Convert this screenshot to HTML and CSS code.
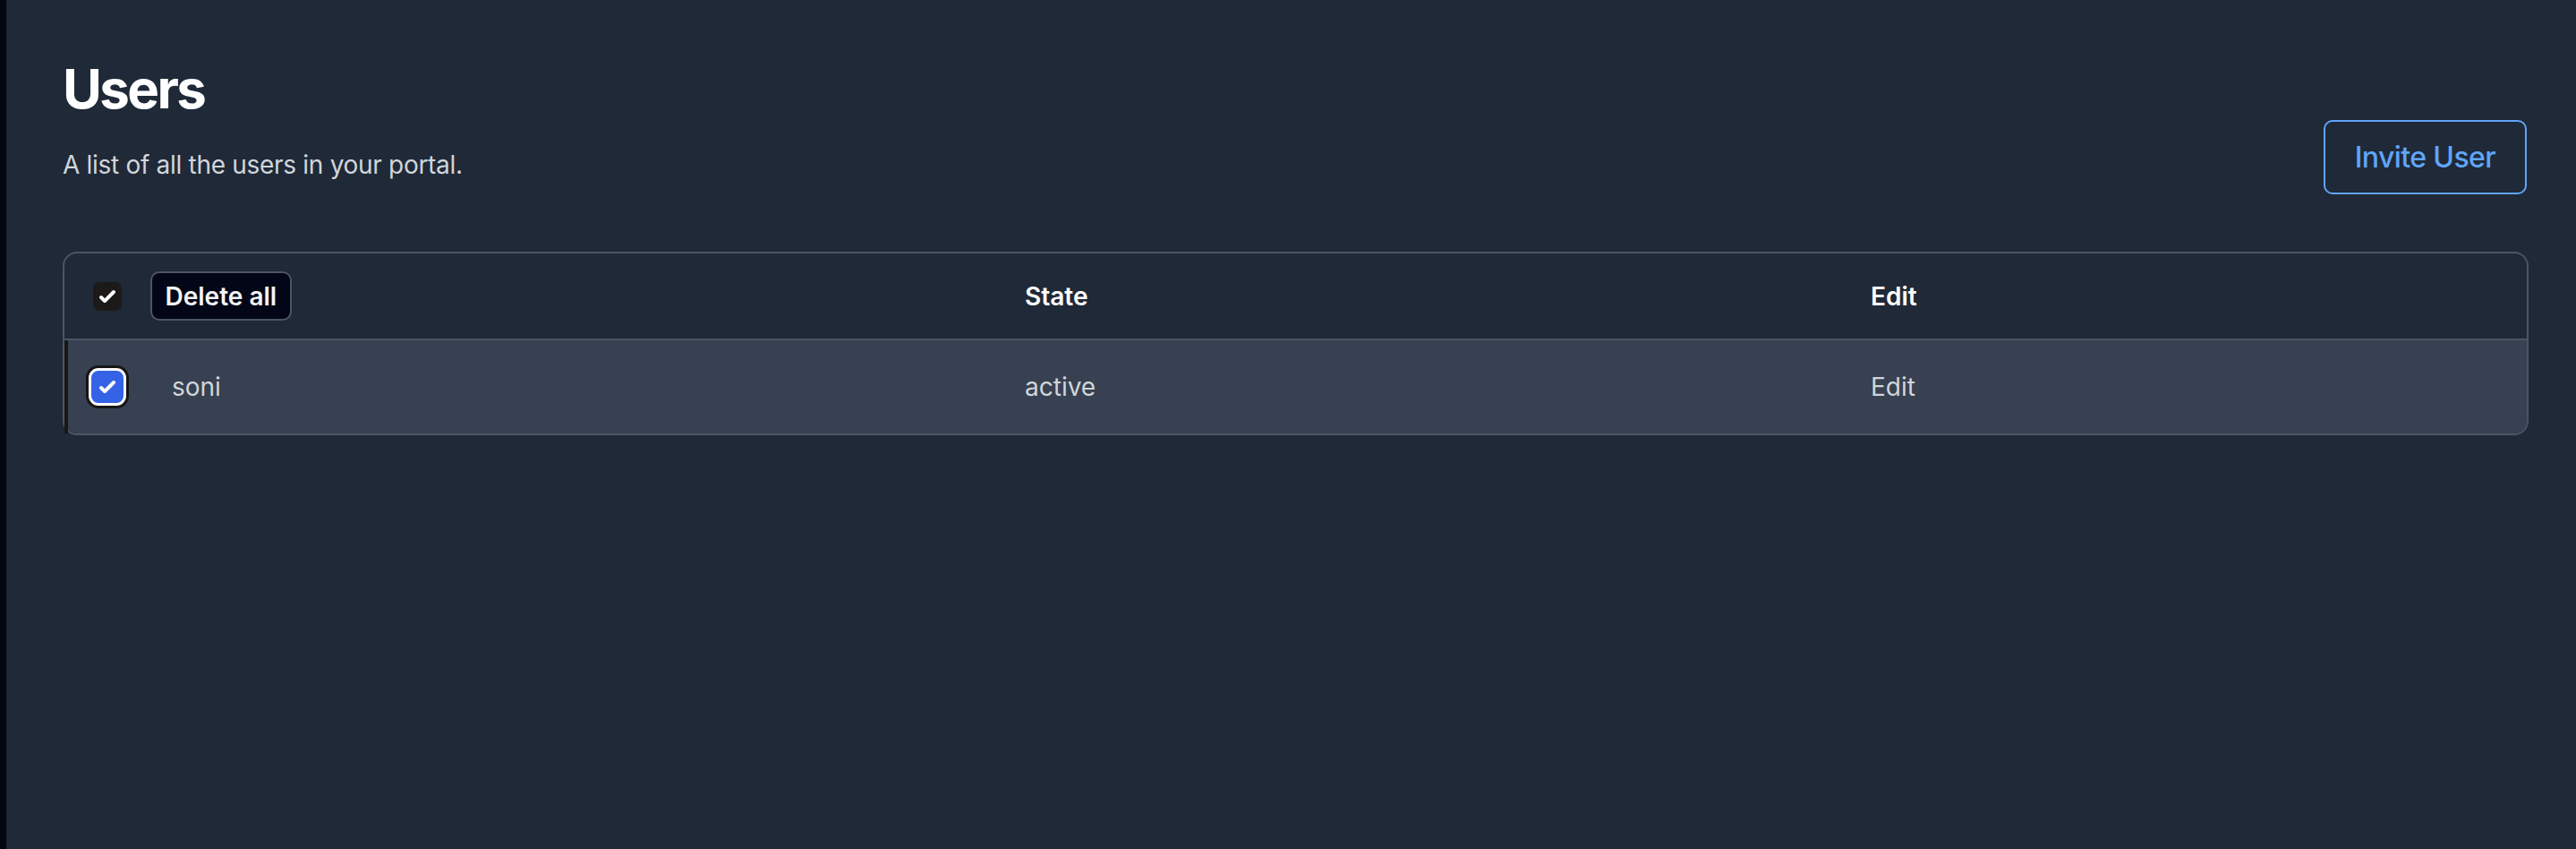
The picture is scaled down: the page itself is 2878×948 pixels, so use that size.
FILE: index.html
```html
<!DOCTYPE html>
<html lang="en">
<head>
<meta charset="utf-8">
<title>Users</title>
<link rel="stylesheet" href="styles.css">
</head>
<body>
<div class="edge"></div>
<main class="main">
  <div class="page-head">
    <div class="intro">
      <h1 class="title">Users</h1>
      <p class="subtitle">A list of all the users in your portal.</p>
    </div>
    <button class="invite-btn" type="button">Invite User</button>
  </div>

  <div class="table">
    <div class="thead">
      <div class="cell-check">
        <span class="checkbox checkbox-dark">
          <svg viewBox="0 0 16 16" width="32" height="32"><path fill="#fff" d="M12.207 4.793a1 1 0 010 1.414l-5 5a1 1 0 01-1.414 0l-2-2a1 1 0 011.414-1.414L6.5 9.086l4.293-4.293a1 1 0 011.414 0z"/></svg>
        </span>
      </div>
      <div class="cell-bulk">
        <button class="delete-btn" type="button">Delete all</button>
      </div>
      <div class="th">State</div>
      <div class="th">Edit</div>
    </div>
    <div class="trow selected">
      <div class="cell-check row-check">
        <span class="checkbox checkbox-blue">
          <svg viewBox="0 0 16 16" width="32" height="32"><path fill="#fff" d="M12.207 4.793a1 1 0 010 1.414l-5 5a1 1 0 01-1.414 0l-2-2a1 1 0 011.414-1.414L6.5 9.086l4.293-4.293a1 1 0 011.414 0z"/></svg>
        </span>
      </div>
      <div class="td">soni</div>
      <div class="td">active</div>
      <div class="td">Edit</div>
    </div>
  </div>
</main>
</body>
</html>
```

FILE: styles.css
```css
* { box-sizing: border-box; }

html, body {
  margin: 0;
  height: 100%;
}

body {
  display: flex;
  background: #1f2937;
  font-family: Inter, "Noto Sans", "Liberation Sans", sans-serif;
  color: #f9fafb;
  min-height: 948px;
}

.edge {
  width: 7px;
  flex: none;
  background: #030712;
}

.main {
  flex: 1;
  padding: 63px 53px 0 63px;
}

.page-head {
  display: flex;
  justify-content: space-between;
  align-items: flex-start;
}

.title {
  margin: 0;
  font-size: 60px;
  line-height: 72px;
  font-weight: 700;
  letter-spacing: -2.6px;
  color: #ffffff;
}

.subtitle {
  margin: 29px 0 0;
  font-size: 28px;
  line-height: 40px;
  letter-spacing: -0.3px;
  color: #d1d5db;
}

.invite-btn {
  margin-top: 71px;
  margin-right: 2px;
  padding: 15.5px 33px;
  border: 2px solid #60a5fa;
  border-radius: 10px;
  background: transparent;
  color: #60a5fa;
  font-family: inherit;
  font-size: 32px;
  line-height: 48px;
  font-weight: 500;
  letter-spacing: -0.6px;
}

.table {
  margin-top: 64px;
  border: 2px solid #4b5563;
  border-radius: 16px;
}

.thead,
.trow {
  display: grid;
  grid-template-columns: 96px 953px 945px 1fr;
}

.thead {
  height: 97px;
  border-bottom: 2px solid #4b5563;
  align-items: center;
}

.trow {
  position: relative;
  background: #374151;
  height: 104px;
  align-items: center;
  border-radius: 0 0 14px 14px;
}

.trow.selected::before {
  content: "";
  position: absolute;
  left: 0;
  top: 0;
  bottom: 0;
  width: 4px;
  background: #171717;
}

.cell-check {
  display: flex;
  align-items: center;
  padding-left: 32px;
}

.row-check {
  padding-left: 27px;
}

.checkbox {
  display: flex;
  align-items: center;
  justify-content: center;
}

.checkbox-dark {
  width: 32px;
  height: 32px;
  border-radius: 7px;
  background: #1c1a18;
}

.checkbox-blue {
  width: 42px;
  height: 42px;
  border: 3px solid #ffffff;
  border-radius: 11px;
  background: #3563e6;
  box-shadow: 0 0 0 3px #161616;
}

.cell-bulk {
  display: flex;
  align-items: center;
}

.delete-btn {
  padding: 5.5px 14.5px;
  border: 2px solid #4b5563;
  border-radius: 10px;
  background: #020617;
  color: #f3f4f6;
  font-family: inherit;
  font-size: 28px;
  line-height: 40px;
  font-weight: 600;
}

.th {
  padding: 0 24px;
  font-size: 28px;
  line-height: 40px;
  font-weight: 600;
  color: #ffffff;
}

.td {
  padding: 32px 24px;
  font-size: 28px;
  line-height: 40px;
  color: #d1d5db;
}
```
